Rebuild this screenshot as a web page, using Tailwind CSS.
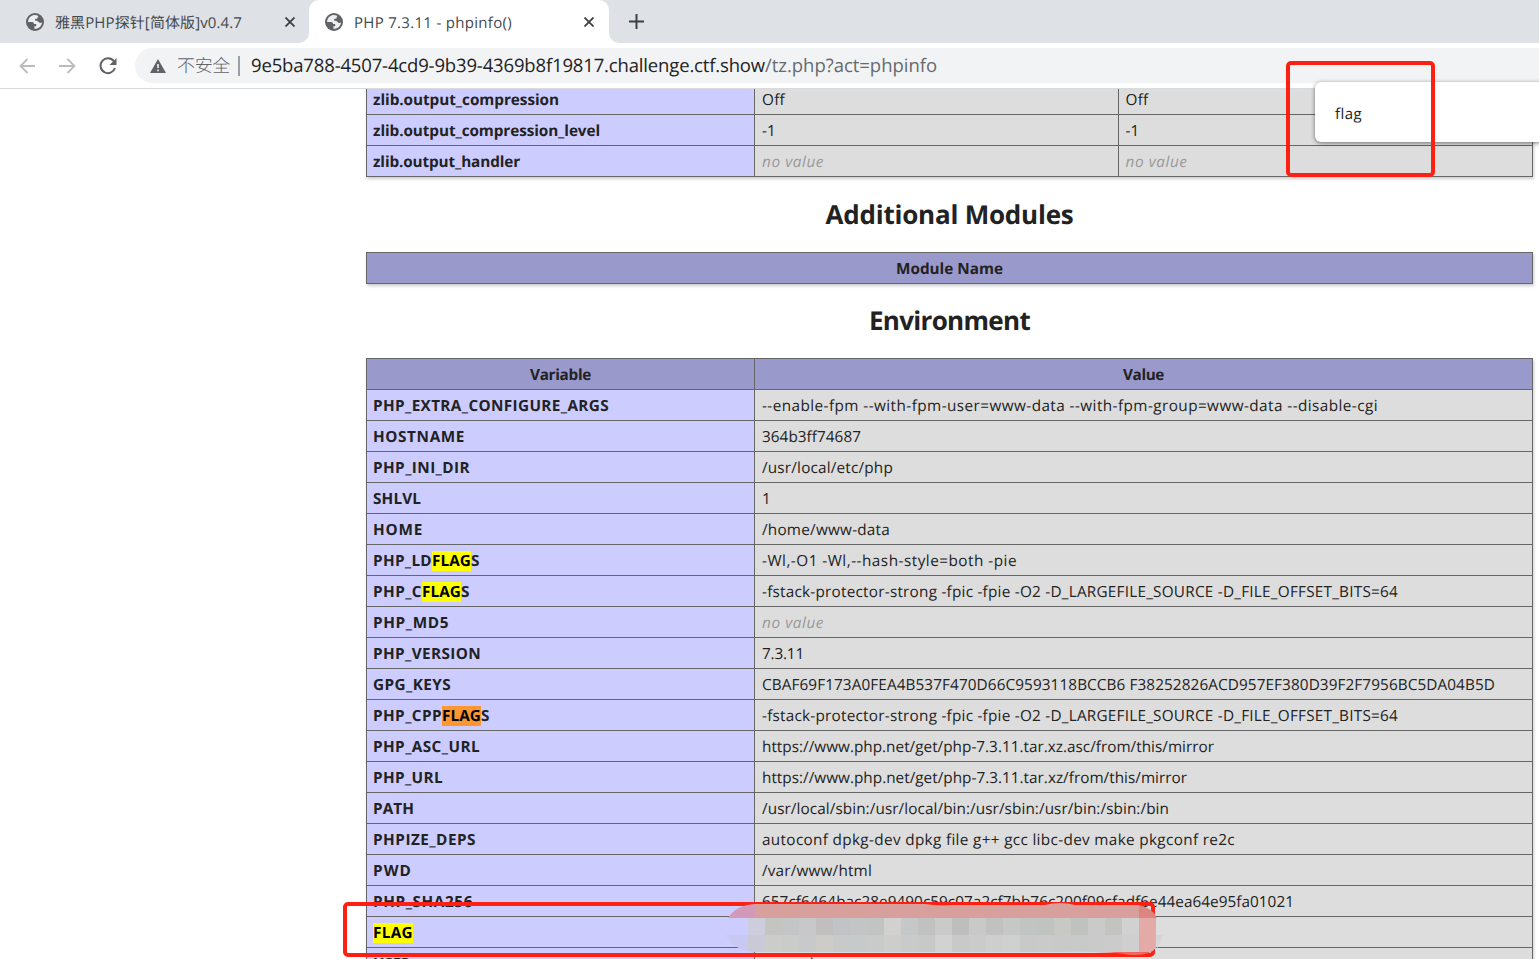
<!DOCTYPE html>
<html lang="zh-CN">
<head>
<meta charset="utf-8">
<title>PHP 7.3.11 - phpinfo()</title>
<script src="https://cdn.jsdelivr.net/npm/@tailwindcss/browser@4"></script>
</head>
<body class="relative flex h-[959px] w-[1539px] flex-col overflow-hidden bg-white font-['Open_Sans','Noto_Sans_CJK_SC',sans-serif] text-[#222] [text-rendering:geometricPrecision]">
<svg class="hidden"><symbol id="globe" viewBox="0 0 18 18"><circle cx="9" cy="9" r="9" fill="#5f6368"/><path d="M7 2.2C4 3 2 5.700 2 9h4.200c1.200 0 1.800.9 1.800 2h2.200v2.200H8.400v2.600c4 .3 7.500-2.700 7.600-6.600-.9.900-2.400 1-3.200 0-.8-1.300-2-1.400-3.600-1.400V5.800h2.200c0-1.200.4-2 1.100-2.700C10.800 2 8.800 1.800 7 2.200Z" fill="#eceef0"/></symbol></svg>

<header class="flex h-[43px] shrink-0 bg-[#dee1e6] text-[15px] text-[#45494d]">
  <div class="flex w-[309px] items-center rounded-br-[10px] pl-[26px]">
    <svg class="h-[18px] w-[18px]"><use href="#globe"/></svg>
    <span class="ml-[11px] w-[230px] whitespace-nowrap pt-[3px]"><span data-w="187">雅黑PHP探针[简体版]v0.4.7</span></span>
    <svg class="h-[10px] w-[10px]" viewBox="0 0 10 10"><path d="M.5.500l9 9M9.500.500l-9 9" stroke="#3c4043" stroke-width="1.800"/></svg>
  </div>
  <div class="relative flex w-[300px] items-center rounded-t-[10px] bg-white pl-4">
    <svg class="absolute bottom-0 -left-[10px] h-[10px] w-[10px]" viewBox="0 0 10 10"><path d="M10 0v10H0A10 10 0 0 0 10 0" fill="#fff"/></svg>
    <svg class="absolute bottom-0 -right-[10px] h-[10px] w-[10px]" viewBox="0 0 10 10"><path d="M0 0v10h10A10 10 0 0 1 0 0" fill="#fff"/></svg>
    <svg class="h-[18px] w-[18px]"><use href="#globe"/></svg>
    <span class="ml-[11px] w-[230px] whitespace-nowrap pt-[3px]"><span data-w="158">PHP 7.3.11 - phpinfo()</span></span>
    <svg class="h-[10px] w-[10px]" viewBox="0 0 10 10"><path d="M.5.500l9 9M9.500.500l-9 9" stroke="#3c4043" stroke-width="1.800"/></svg>
  </div>
  <svg class="mt-[14px] ml-5 h-[15px] w-[15px]" viewBox="0 0 15 15"><path d="M7.500 0v15M0 7.500h15" stroke="#3c4043" stroke-width="2"/></svg>
</header>

<nav class="flex h-[46px] shrink-0 items-center border-b border-[#d9dadc] pl-[19px]">
  <svg class="h-4 w-4" viewBox="0 0 16 16" fill="none" stroke="#babcbe" stroke-width="1.800"><path d="M16 8H1.500M8.500 1L1.500 8l7 7"/></svg>
  <svg class="ml-6 h-4 w-[17px]" viewBox="0 0 17 16" fill="none" stroke="#babcbe" stroke-width="1.800"><path d="M0 8h15.500M8.500 1l7 7-7 7"/></svg>
  <svg class="ml-[23px] h-[18px] w-[18px]" viewBox="0 0 18 18"><path d="M14.800 4.200A7.400 7.400 0 1 0 16 11" fill="none" stroke="#5f6368" stroke-width="2"/><path d="M17.500 1v7h-7z" fill="#5f6368"/></svg>
  <div class="ml-[18px] flex h-[35px] flex-1 items-center rounded-l-full bg-[#f1f3f4] pl-[15px]">
    <svg class="h-[14px] w-4" viewBox="0 0 16 14"><path d="M8 0l8 14H0z" fill="#5f6368"/><path d="M8 5v4M8 10.500v1.800" stroke="#f1f3f4" stroke-width="1.600"/></svg>
    <span class="ml-[11px] w-[54px] whitespace-nowrap pt-px text-[18px] font-light text-[#5f6368]"><span data-w="53">不安全</span></span>
    <i class="ml-[7px] h-5 w-[2px] bg-[#9b9ea2]"></i>
    <span class="ml-[11px] whitespace-nowrap pt-px text-[18.500px]"><span data-w="514">9e5ba788-4507-4cd9-9b39-4369b8f19817.challenge.ctf.show</span><span class="text-[#666a6e]" data-w="172">/tz.php?act=phpinfo</span></span>
  </div>
</nav>

<main class="h-[870px] overflow-hidden pl-[366px] text-[15.300px] leading-[22px]">
  <div class="-mt-[5px] w-[1167px] border-l border-[#666] shadow-[1px_2px_3px_#ccc]" id="zlib"></div>
  <h2 class="flex h-[75px] w-[1167px] items-center justify-center pb-[2px] text-[26px] leading-9 font-bold"><span data-w="248">Additional Modules</span></h2>
  <div class="flex h-8 w-[1167px] items-center justify-center border border-[#666] bg-[#9999cc] pt-px font-bold shadow-[1px_2px_3px_#ccc]"><span data-w="107">Module Name</span></div>
  <h2 class="flex h-[74px] w-[1167px] items-center justify-center pb-[3px] text-[26px] leading-9 font-bold"><span data-w="161">Environment</span></h2>
  <div class="w-[1167px] border-t border-l border-[#666] shadow-[1px_2px_3px_#ccc]" id="env">
    <div class="flex h-[31px] bg-[#9999cc] font-bold">
      <div class="flex w-[388px] items-center justify-center border-r border-b border-[#666] pt-px"><span data-w="61">Variable</span></div>
      <div class="flex flex-1 items-center justify-center border-r border-b border-[#666] pt-px"><span data-w="41">Value</span></div>
    </div>
  </div>
</main>

<div class="absolute top-[82px] left-[1315px] flex h-[60px] w-[240px] items-center rounded-md bg-white pl-[20px] text-[15px] shadow-[0_1px_4px_rgba(0,0,0,0.5)]"><span class="pt-[5px]"><span data-w="27">flag</span></span></div>
<div class="absolute top-[61px] left-[1286px] h-[116px] w-[149px] rounded-[5px] border-4 border-[#ff2014]"></div>

<div class="absolute top-[902px] left-[343px] h-[55px] w-[812px] rounded-[5px] border-4 border-[#ff2014]"></div>
<svg class="absolute top-[900px] left-[720px] h-[59px] w-[450px]" viewBox="720 900 450 59">
  <clipPath id="blob"><path d="M728 918Q736 905 755 904H925Q938 906 950 905H1045Q1060 901 1075 905H1138Q1152 907 1157 918H1156V948Q1150 956 1130 955Q1110 951 1060 952H755Q734 951 726 935H733V918Z"/></clipPath>
  <g clip-path="url(#blob)" id="mosaic" shape-rendering="crispEdges"></g>
  <path d="M1156 935h7l-6 14z" fill="#d5d5d5"/>
</svg>

<script>
const NV = '<i class="text-[#999]" data-w="62">no value</i>';
const t = (w, s) => `<span data-w="${w}">${s}</span>`;
const hit = s => `<mark class="bg-[#ffff00] text-black inline-block h-5 leading-5">${s}</mark>`;
const cell = (cls, s) => `<div class="flex items-center whitespace-nowrap border-r border-b border-[#666] pt-px ${cls}"><div>${s}</div></div>`;
const key = s => cell('w-[388px] bg-[#ccccff] pl-[6px] font-bold', s);
const row = s => `<div class="flex h-[31px]">${s}</div>`;

document.getElementById('zlib').innerHTML = [
  [t(186, 'zlib.output_compression'), t(23, 'Off')],
  [t(227, 'zlib.output_compression_level'), t(14, '-1')],
  [t(147, 'zlib.output_handler'), NV]
].map(([k, v]) => row(key(k) + cell('w-[364px] bg-[#ddd] pl-[7px]', v) + cell('flex-1 bg-[#ddd] pl-[6.500px]', v))).join('');

document.getElementById('env').insertAdjacentHTML('beforeend', [
  [t(236, 'PHP_EXTRA_CONFIGURE_ARGS'), t(616, '--enable-fpm --with-fpm-user=www-data --with-fpm-group=www-data --disable-cgi')],
  [t(92, 'HOSTNAME'), t(99, '364b3ff74687')],
  [t(97, 'PHP_INI_DIR'), t(131, '/usr/local/etc/php')],
  [t(48, 'SHLVL'), t(8, '1')],
  [t(50, 'HOME'), t(128, '/home/www-data')],
  [t(59, 'PHP_LD') + hit(t(39, 'FLAG')) + t(10, 'S'), t(255, '-Wl,-O1 -Wl,--hash-style=both -pie')],
  [t(49, 'PHP_C') + hit(t(39, 'FLAG')) + t(10, 'S'), t(636, '-fstack-protector-strong -fpic -fpie -O2 -D_LARGEFILE_SOURCE -D_FILE_OFFSET_BITS=64')],
  [t(76, 'PHP_MD5'), NV],
  [t(108, 'PHP_VERSION'), t(42, '7.3.11')],
  [t(78, 'GPG_KEYS'), t(733, 'CBAF69F173A0FEA4B537F470D66C9593118BCCB6 F38252826ACD957EF380D39F2F7956BC5DA04B5D')],
  [t(69, 'PHP_CPP') + '<mark class="bg-[#ff9632] text-black inline-block h-5 leading-5">' + t(39, 'FLAG') + '</mark>' + t(10, 'S'), t(636, '-fstack-protector-strong -fpic -fpie -O2 -D_LARGEFILE_SOURCE -D_FILE_OFFSET_BITS=64')],
  [t(107, 'PHP_ASC_URL'), t(452, 'https://www.php.net/get/php-7.3.11.tar.xz.asc/from/this/mirror')],
  [t(70, 'PHP_URL'), t(425, 'https://www.php.net/get/php-7.3.11.tar.xz/from/this/mirror')],
  [t(41, 'PATH'), t(407, '/usr/local/sbin:/usr/local/bin:/usr/sbin:/usr/bin:/sbin:/bin')],
  [t(103, 'PHPIZE_DEPS'), t(473, 'autoconf dpkg-dev dpkg file g++ gcc libc-dev make pkgconf re2c')],
  [t(39, 'PWD'), t(110, '/var/www/html')],
  [t(100, 'PHP_SHA256'), t(532, '657cf6464bac28e9490c59c07a2cf7bb76c200f09cfadf6e44ea64e95fa01021')],
  [hit(t(40, 'FLAG')), ''],
  [t(38, 'USER'), t(76, 'www-data')]
].map(([k, v]) => row(key(k) + cell('flex-1 bg-[#ddd] pl-[7px]', v))).join(''));

// Spread each label over its measured width; repeated because advances shift once spacing is set.
function fit() {
  const all = [...document.querySelectorAll('[data-w]')];
  for (let pass = 0; pass < 4; pass++) {
    all.forEach(e => {
      const n = [...e.textContent].length;
      const now = parseFloat(e.style.letterSpacing) || 0;
      const d = now + (e.dataset.w - e.getBoundingClientRect().width) / n;
      e.style.letterSpacing = d.toFixed(4) + 'px';
    });
  }
}
fit();
document.fonts.ready.then(fit);
window.addEventListener('load', fit);

// Pixelated cover over the flag value.
const r1 = ['#ccccff','#cdcddd','#c4c4c1','#c3c5c6','#c8c8ca','#c0bfbe','#c2c3c7','#c3c4c6','#c2c4c4','#d3d1cf','#c5c7c9','#c1c1c1','#cacac8','#bebebe','#c9c9c9','#c1c1c1','#c6c8c8','#c2c4c4','#c1c3c1','#c8c8c5','#c0c2c0','#cacaca','#c3c3c0','#d1d1d1','#e3aaa8'];
const r2 = ['#c8c8f3','#c9c9d8','#cccdca','#caccca','#c8c9ca','#cdccc9','#c8cac9','#c7caca','#c9cbcb','#cdcecc','#c9caca','#c7c8c8','#d2d2d2','#c9c9c9','#cbcbcb','#cecece','#cfd1d1','#c8c9c8','#c9cac9','#c8c9c8','#c8c9c9','#cacaca','#cbcbcb','#cfcfcf','#e3aaa8'];
const R = (x, y, w, h, f) => `<rect x="${x}" y="${y}" width="${w}" height="${h}" fill="${f}"/>`;
let m = R(720, 900, 35, 18, '#d299b8') + R(755, 900, 384, 18, '#d8a09d') + R(1139, 900, 20, 18, '#dd8580');
// The first cell and the last one are wider than the 17px columns between them.
let x = 720;
r1.forEach((c, i) => {
  const w = i === 0 ? 28 : i === r1.length - 1 ? 24 : 17;
  m += R(x, 918, w, 17, c) + R(x, 935, w, 17, r2[i]);
  x += w;
});
m += R(935, 952, 220, 4, '#f4655e');
document.getElementById('mosaic').innerHTML = m;
</script>
</body>
</html>
